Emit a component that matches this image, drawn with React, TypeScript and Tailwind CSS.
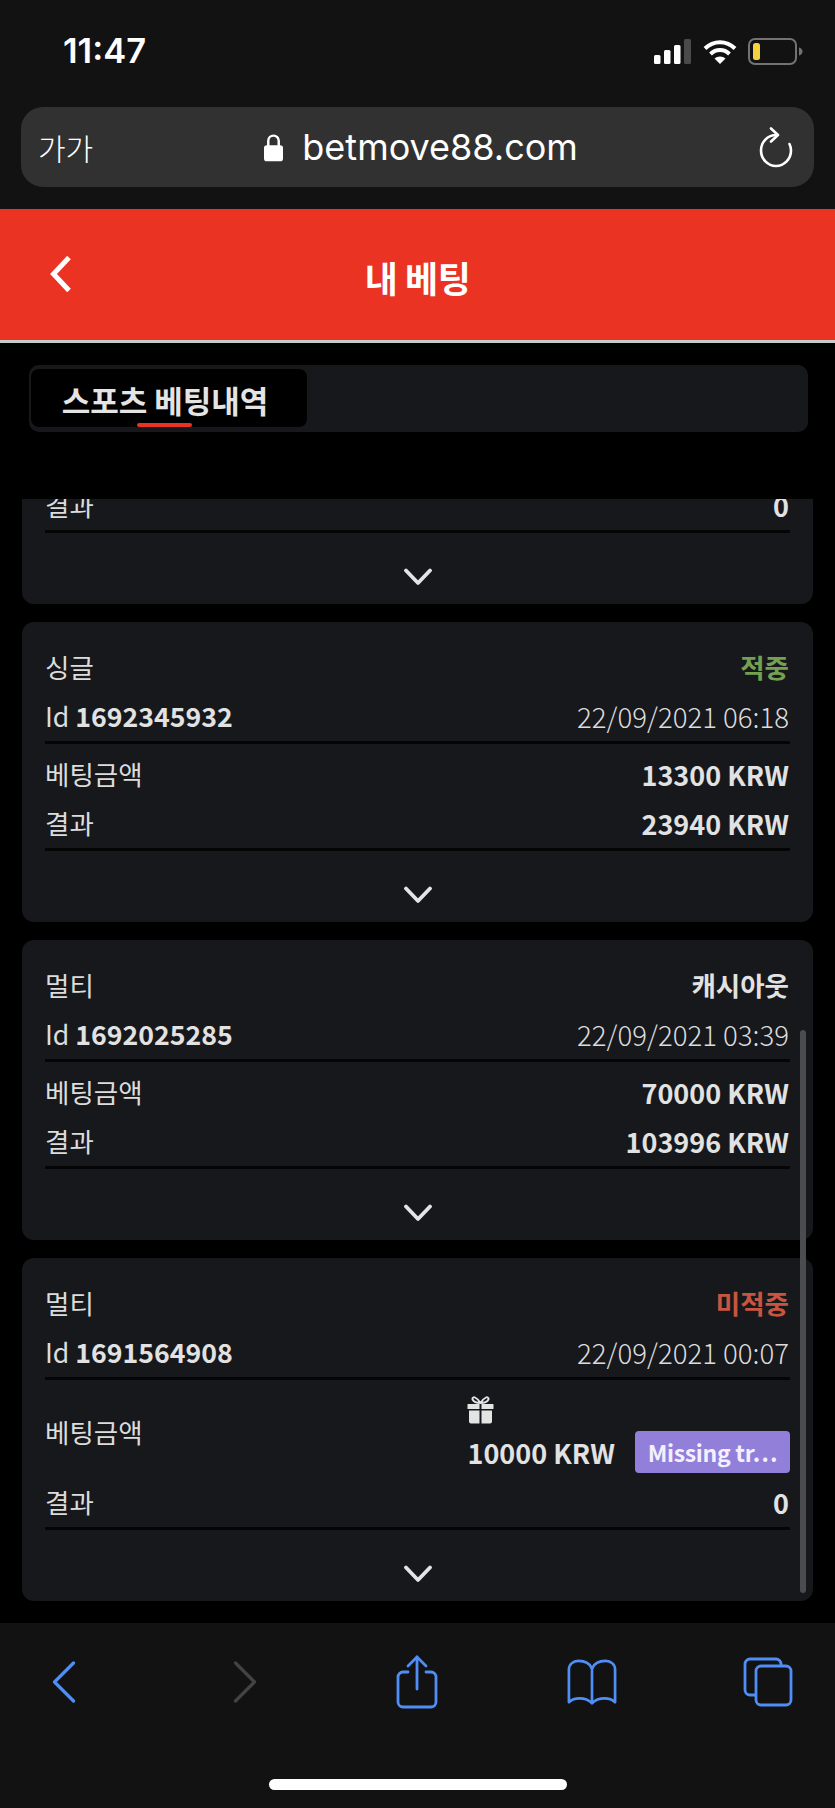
const sans = "font-['Noto_Sans_CJK_KR','Noto_Sans',sans-serif]";

const ChevronDown = () => (
  <svg width="28" height="18" viewBox="0 0 28 18" fill="none">
    <path d="M2 2.500L14 15L26 2.500" stroke="#e4e4e4" strokeWidth="3.800" strokeLinecap="round" strokeLinejoin="round" />
  </svg>
);

const Gift = () => (
  <svg width="27" height="28" viewBox="0 0 27 28" fill="#e4e4e4">
    <path d="M1 8h11.500v5H1a.5.5 0 0 1-.5-.5v-4A.5.5 0 0 1 1 8zM14.500 8H26a.5.5 0 0 1 .5.5v4a.5.5 0 0 1-.5.5H14.500zM2 14.500h10.500V27.500H4a2 2 0 0 1-2-2zM14.500 14.500H25v11a2 2 0 0 1-2 2h-8.500z" />
    <path d="M13.500 7C10 7 6.500 5.500 5.500 3.500 5 2 6.500.8 8 1.500 10.500 2.700 12.500 5 13.500 7zM13.500 7C17 7 20.500 5.500 21.500 3.500 22 2 20.500.8 19 1.500 16.500 2.700 14.500 5 13.500 7z" fill="none" stroke="#e4e4e4" strokeWidth="1.800" />
  </svg>
);

const Row = ({ left, right, className = "h-[49px]" }: { left: React.ReactNode; right: React.ReactNode; className?: string }) => (
  <div className={`flex items-center justify-between pl-[23px] pr-[24px] ${className}`}>
    <span className="text-[26.5px] leading-none text-[#dcdcdc]">{left}</span>
    {right}
  </div>
);

const Value = ({ children, color = "text-[#e2e2e2]" }: { children: React.ReactNode; color?: string }) => (
  <span className={`text-[27px] font-semibold leading-none ${color}`}>{children}</span>
);

const Divider = () => <div className="mx-[23px] h-[3px] bg-[#050506]" />;

const CardFooter = () => (
  <div className="flex h-[71px] items-start justify-center pt-[35px]">
    <ChevronDown />
  </div>
);

interface Bet {
  kind: string;
  status: string;
  statusColor: string;
  id: string;
  date: string;
  stake: string;
  result: string;
}

const bets: Bet[] = [
  { kind: "싱글", status: "적중", statusColor: "text-[#74a052]", id: "1692345932", date: "22/09/2021 06:18", stake: "13300 KRW", result: "23940 KRW" },
  { kind: "멀티", status: "캐시아웃", statusColor: "text-[#e2e2e2]", id: "1692025285", date: "22/09/2021 03:39", stake: "70000 KRW", result: "103996 KRW" },
];

const CardHead = ({ bet }: { bet: Pick<Bet, "kind" | "status" | "statusColor" | "id" | "date"> }) => (
  <>
    <div className="pt-[21px]">
      <Row left={bet.kind} right={<span className={`text-[26.5px] font-semibold leading-none ${bet.statusColor}`}>{bet.status}</span>} />
      <Row
        left={
          <span className="text-[26.7px]">
            Id <b className="font-semibold text-[#e2e2e2]">{bet.id}</b>
          </span>
        }
        right={<span className="text-[27.6px] font-light leading-none text-[#dcdcdc]">{bet.date}</span>}
      />
    </div>
    <Divider />
  </>
);

const Card = ({ children }: { children: React.ReactNode }) => (
  <div className="shrink-0 rounded-[12px] bg-[#17181c]">{children}</div>
);

export default function App() {
  return (
    <div className={`flex h-[1808px] w-[835px] flex-col overflow-hidden bg-black ${sans}`}>
      {/* ios status + url bar */}
      <div className="h-[209px] shrink-0 bg-[#121212]">
        <div className="flex h-[107px] items-start justify-between pl-[63px] pr-[32px] pt-[30px]">
          <span className="font-['Inter',sans-serif] text-[34.5px] font-semibold leading-[42px] text-white">11:47</span>
          <div className="flex items-center gap-[11px] pt-[8px]">
            <svg width="38" height="25" viewBox="0 0 38 25">
              <rect x="0" y="16" width="6.500" height="9" rx="1.500" fill="#fff" />
              <rect x="10" y="11" width="6.500" height="14" rx="1.500" fill="#fff" />
              <rect x="20" y="6" width="6.500" height="19" rx="1.500" fill="#fff" />
              <rect x="30" y="0" width="7" height="25" rx="1.500" fill="#4a4a4a" />
            </svg>
            <svg width="34" height="25" viewBox="0 0 34 25" fill="none" stroke="#fff" strokeWidth="4">
              <path d="M2 9.500C10.500 1 23.500 1 32 9.500" />
              <path d="M7.500 15C13 9.800 21 9.800 26.500 15" />
              <path d="M17 25L11.500 19.500C14.500 16.800 19.500 16.800 22.500 19.500Z" fill="#fff" stroke="none" />
            </svg>
            <svg width="55" height="27" viewBox="0 0 55 27" fill="none">
              <rect x="1" y="1" width="47" height="25" rx="6" stroke="#737373" strokeWidth="2" />
              <rect x="5" y="5" width="7" height="17" rx="2.500" fill="#f5d33f" />
              <path d="M51 9.500C53 10 54.500 11.500 54.500 13.500C54.500 15.500 53 17 51 17.500Z" fill="#737373" />
            </svg>
          </div>
        </div>
        <div className="relative mx-[21px] flex h-[80px] items-center justify-between rounded-[22px] bg-[#313131] pl-[17px] pr-[21px]">
          <span className="text-[30px] font-light leading-none text-white">가가</span>
          <div className="flex items-center gap-[19px] pr-[10px]">
            <svg width="19" height="29" viewBox="0 0 20 29" fill="none">
              <path d="M4.500 13V7.500a5.500 5.500 0 0 1 11 0V13" stroke="#fff" strokeWidth="2.600" />
              <rect x="0" y="12" width="20" height="17" rx="3" fill="#fff" />
            </svg>
            <span className="font-['Inter',sans-serif] text-[36px] leading-none text-white">betmove88.com</span>
          </div>
          <svg width="34" height="41" viewBox="0 0 34 41" fill="none" stroke="#fff" strokeWidth="2.600" strokeLinecap="round" strokeLinejoin="round">
            <path d="M17.500 8C8.500 8 2 15 2 23.500S8.700 39 17 39s15-7 15-15.500c0-2.500-.5-4.500-1.500-6.500" />
            <path d="M12 1.500L19 8l-7 6.500" />
          </svg>
        </div>
      </div>

      {/* red header */}
      <header className="relative flex h-[134px] shrink-0 items-center justify-center border-b-[3px] border-[#c9c9c9] bg-[#ea3323] pt-[4px]">
        <svg className="absolute left-[50px] top-[47px]" width="22" height="36" viewBox="0 0 22 36" fill="none">
          <path d="M19 1.500L3.500 18L19 34.500" stroke="#fff" strokeWidth="5" strokeLinejoin="miter" />
        </svg>
        <h1 className="text-[36px] font-bold leading-none tracking-[-0.5px] text-white">내 베팅</h1>
      </header>

      {/* tabs */}
      <div className="h-[156px] shrink-0 pl-[29px] pr-[27px] pt-[22px]">
        <div className="h-[67px] rounded-[10px] bg-[#17181c] p-[4px] pl-[2px]">
          <div className="relative flex h-[58px] w-[276px] items-center justify-center rounded-[8px] bg-black pr-[8px] pt-[2px]">
            <span className="text-[31px] font-semibold leading-none text-[#e4e4e4]">스포츠 베팅내역</span>
            <div className="absolute bottom-0 left-[106px] h-[4px] w-[55px] rounded-[2px] bg-[#ea3323]" />
          </div>
        </div>
      </div>

      {/* scrolled list */}
      <div className="relative flex min-h-0 flex-1 flex-col justify-end gap-[18px] overflow-hidden px-[22px] pb-[22px]">
        <Card>
          <Row left="결과" right={<Value>0</Value>} />
          <Divider />
          <CardFooter />
        </Card>

        {bets.map((bet) => (
          <Card key={bet.id}>
            <CardHead bet={bet} />
            <div className="pt-[6px]">
              <Row left="베팅금액" right={<Value>{bet.stake}</Value>} />
              <Row left="결과" right={<Value>{bet.result}</Value>} />
            </div>
            <Divider />
            <CardFooter />
          </Card>
        ))}

        <Card>
          <CardHead bet={{ kind: "멀티", status: "미적중", statusColor: "text-[#c8553f]", id: "1691564908", date: "22/09/2021 00:07" }} />
          <div className="pt-[6px]">
            <div className="flex h-[92px] items-center justify-between pl-[23px] pr-[23px]">
              <span className="text-[26.5px] leading-none text-[#dcdcdc]">베팅금액</span>
              <div className="flex flex-col items-start pt-[5px]">
                <Gift />
                <div className="mt-[7px] flex items-center gap-[20px]">
                  <Value>10000 KRW</Value>
                  <span className="flex h-[42px] w-[155px] items-center justify-center whitespace-nowrap rounded-[4px] bg-[#927fd9] text-[23px] font-semibold leading-none tracking-[-0.3px] text-[#f3f0ff]">
                    Missing tr⋯
                  </span>
                </div>
              </div>
            </div>
            <Row left="결과" right={<Value>0</Value>} />
          </div>
          <Divider />
          <CardFooter />
        </Card>

        {/* overlay scrollbar */}
        <div className="absolute right-[29px] top-[531px] h-[563px] w-[6px] rounded-full bg-[#4b4c50]" />
      </div>

      {/* safari toolbar */}
      <div className="h-[185px] shrink-0 bg-[#121212]">
        <div className="flex items-start justify-between pl-[39px] pr-[42px] pt-[32px]">
          <div className="flex h-[54px] w-[50px] items-center justify-center">
            <svg width="24" height="42" viewBox="0 0 24 42" fill="none">
              <path d="M21.500 2L2.500 21L21.500 40" stroke="#4f8ef7" strokeWidth="3.200" strokeLinecap="round" strokeLinejoin="round" />
            </svg>
          </div>
          <div className="flex h-[54px] w-[50px] items-center justify-center pl-[9px]">
            <svg width="24" height="42" viewBox="0 0 24 42" fill="none">
              <path d="M2.500 2L21.500 21L2.500 40" stroke="#434343" strokeWidth="3.200" strokeLinecap="round" strokeLinejoin="round" />
            </svg>
          </div>
          <div className="flex h-[54px] w-[50px] items-center justify-center pl-[1px]">
            <svg width="42" height="54" viewBox="0 0 42 54" fill="none" stroke="#4f8ef7" strokeWidth="2.800" strokeLinecap="round" strokeLinejoin="round">
              <path d="M12 17H7a5 5 0 0 0-5 5v25a5 5 0 0 0 5 5h28a5 5 0 0 0 5-5V22a5 5 0 0 0-5-5h-5" />
              <path d="M21 34V2" />
              <path d="M12 11L21 2l9 9" />
            </svg>
          </div>
          <div className="flex h-[54px] w-[50px] items-center justify-center">
            <svg width="52" height="48" viewBox="0 0 52 48" fill="none" stroke="#4f8ef7" strokeWidth="2.800" strokeLinecap="round" strokeLinejoin="round">
              <path d="M26 10C24 5 19 2 12 2 6 2 2 6 2 11v34c3-3 6-4 11-4 6 0 10 2 13 5 3-3 7-5 13-5 5 0 8 1 11 4V11c0-5-4-9-10-9-7 0-12 3-14 8z" />
              <path d="M26 10v36" />
            </svg>
          </div>
          <div className="flex h-[54px] w-[50px] items-center justify-center">
            <svg width="50" height="50" viewBox="0 0 50 50" fill="none" stroke="#4f8ef7" strokeWidth="2.800" strokeLinejoin="round">
              <path d="M38 9V7a5 5 0 0 0-5-5H7a5 5 0 0 0-5 5v26a5 5 0 0 0 5 5h6" />
              <rect x="13" y="9" width="35" height="39" rx="5" />
            </svg>
          </div>
        </div>
        <div className="mx-auto mt-[70px] h-[11px] w-[298px] rounded-full bg-white" />
      </div>
    </div>
  );
}
